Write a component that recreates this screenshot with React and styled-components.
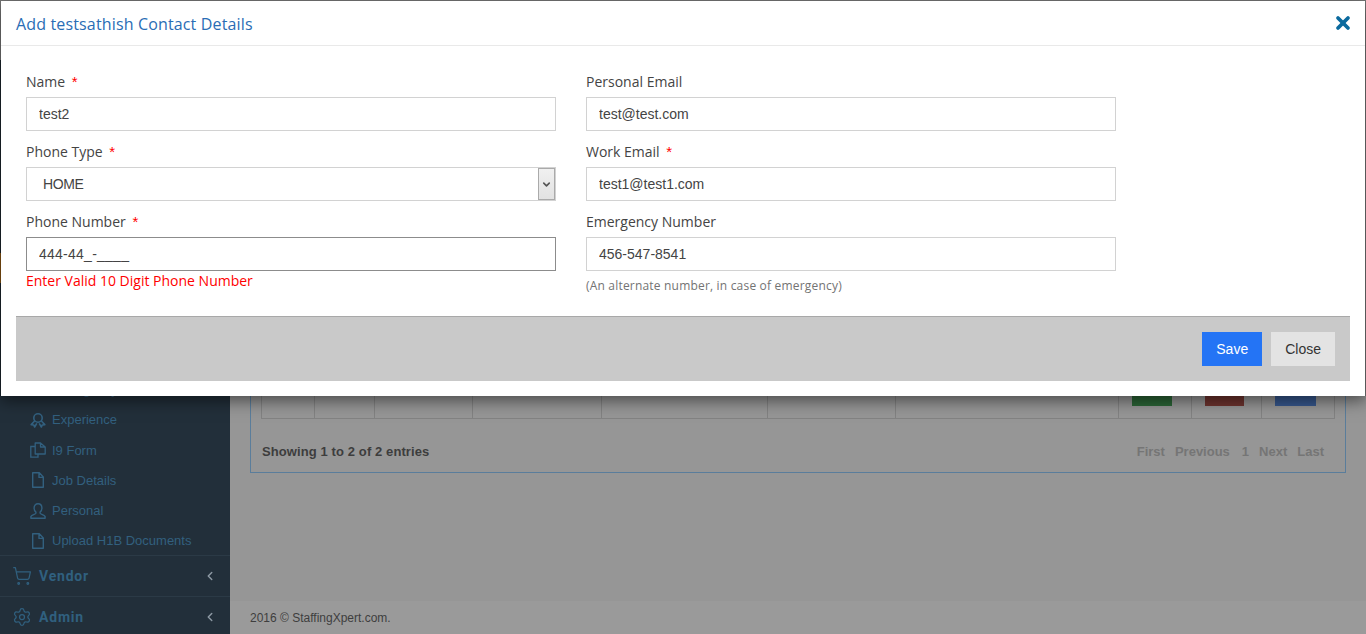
import React from 'react'
import styled, { createGlobalStyle } from 'styled-components'
import { ShoppingCart, Settings, ChevronLeft, X, ChevronDown } from 'lucide-react'

const GlobalStyle = createGlobalStyle`
  html, body { margin: 0; padding: 0; height: 100%; overflow: hidden; }
  body { font-family: "Liberation Sans", Arial, sans-serif; background: #969696; }
  * { box-sizing: border-box; }
`

const BadgeIcon = () => (
  <svg width="16" height="16" viewBox="0 0 16 16" fill="none" stroke="currentColor" strokeWidth="1.6">
    <circle cx="8" cy="6" r="4.2" />
    <path d="M4.6 9 1.2 12.6l2.6.4.8 2 2.2-3.6M11.4 9l3.4 3.6-2.6.4-.8 2-2.2-3.6" strokeLinejoin="round" />
  </svg>
)

const DocsIcon = () => (
  <svg width="16" height="16" viewBox="0 0 16 16" fill="none" stroke="currentColor" strokeWidth="1.3">
    <path d="M5 4.5H.8v10.7H8V12" />
    <path d="M5.2 1h5.3l4.7 4v7H5.2zM10.5 1v4h4.7" strokeLinejoin="round" />
  </svg>
)

const FileIcon = () => (
  <svg width="16" height="16" viewBox="0 0 16 16" fill="none" stroke="currentColor" strokeWidth="1.4">
    <path d="M2.7.8h6.6l4 4.2v10.200H2.7zM9 1v4.400h4.300" strokeLinejoin="round" />
  </svg>
)

const UserIcon = () => (
  <svg width="16" height="16" viewBox="0 0 16 16" fill="none" stroke="currentColor" strokeWidth="1.4">
    <path d="M8 .8c2.400 0 3.900 1.800 3.900 4.200 0 1.700-.7 3.200-1.800 4.100v1.200c0 .7 4.500 1.600 5 3.200v1.700H.9v-1.700c.5-1.600 5-2.500 5-3.200V9.100C4.800 8.200 4.100 6.700 4.100 5 4.100 2.600 5.600.8 8 .8z" strokeLinejoin="round" />
  </svg>
)

// sits almost entirely under the modal, only needs to stay above its edge
const DotIcon = () => (
  <svg width="16" height="16" viewBox="0 0 16 16" fill="none" stroke="currentColor" strokeWidth="1.4">
    <circle cx="8" cy="5" r="4" />
  </svg>
)

const subItems = [
  { label: 'Emergency', Icon: DotIcon },
  { label: 'Experience', Icon: BadgeIcon },
  { label: 'I9 Form', Icon: DocsIcon },
  { label: 'Job Details', Icon: FileIcon },
  { label: 'Personal', Icon: UserIcon },
  { label: 'Upload H1B Documents', Icon: FileIcon },
]

const sections = [
  { label: 'Vendor', Icon: ShoppingCart },
  { label: 'Admin', Icon: Settings },
]

const cells = [53, 60, 98, 129, 166, 128, 223, 73, 70, 73]
const swatches = {
  7: { bg: '#2b6536', w: 40 },
  8: { bg: '#6e332e', w: 39 },
  9: { bg: '#36578d', w: 41 },
}

export default function App() {
  return (
    <>
      <GlobalStyle />
      <Page>
        <Sidebar>
          <ActiveMark />
          <SubList>
            {subItems.map(({ label, Icon }) => (
              <SubItem key={label}>
                <Icon />
                <span>{label}</span>
              </SubItem>
            ))}
          </SubList>
          {sections.map(({ label, Icon }) => (
            <Section key={label}>
              <Icon size={20} strokeWidth={1.5} />
              <SectionLabel>{label}</SectionLabel>
              <ChevronLeft size={14} strokeWidth={2.5} color="#8d99a3" />
            </Section>
          ))}
        </Sidebar>
        <Main>
          <Content>
            <Panel>
              <DataTable>
                <tbody>
                  <tr>
                    {cells.map((w, i) => (
                      <Cell key={i} style={{ width: w }}>
                        {swatches[i] && <Swatch $bg={swatches[i].bg} $w={swatches[i].w} />}
                      </Cell>
                    ))}
                  </tr>
                </tbody>
              </DataTable>
              <PanelFoot>
                <Entries>Showing 1 to 2 of 2 entries</Entries>
                <Pager>
                  <span>First</span>
                  <span>Previous</span>
                  <PageNum>1</PageNum>
                  <span>Next</span>
                  <span>Last</span>
                </Pager>
              </PanelFoot>
            </Panel>
          </Content>
          <PageFooter>2016 © StaffingXpert.com.</PageFooter>
        </Main>
      </Page>

      <Modal>
        <ModalHeader>
          <ModalTitle>Add testsathish Contact Details</ModalTitle>
          <CloseIcon size={20} strokeWidth={4.5} />
        </ModalHeader>
        <ModalBody>
          <Field>
            <Label>Name <Req>*</Req></Label>
            <Input defaultValue="test2" />
          </Field>
          <Field>
            <Label>Personal Email</Label>
            <Input defaultValue="test@test.com" />
          </Field>
          <Field>
            <Label>Phone Type <Req>*</Req></Label>
            <SelectBox>
              <SelectValue>HOME</SelectValue>
              <SelectArrow><ChevronDown size={11} strokeWidth={3.5} /></SelectArrow>
            </SelectBox>
          </Field>
          <Field>
            <Label>Work Email <Req>*</Req></Label>
            <Input defaultValue="test1@test1.com" />
          </Field>
          <Field>
            <Label>Phone Number <Req>*</Req></Label>
            <Input $focus defaultValue="444-44_-____" />
            <ErrorText>Enter Valid 10 Digit Phone Number</ErrorText>
          </Field>
          <Field>
            <Label>Emergency Number</Label>
            <Input defaultValue="456-547-8541" />
            <Hint>(An alternate number, in case of emergency)</Hint>
          </Field>
        </ModalBody>
        <ModalFooter>
          <Button $bg="#2474f5" $color="#fff">Save</Button>
          <Button $bg="#e3e3e3" $color="#333">Close</Button>
        </ModalFooter>
      </Modal>
    </>
  )
}

const Page = styled.div`
  display: flex;
  align-items: flex-start;
  height: 634px;
  width: 1366px;
  overflow: hidden;
`

const Sidebar = styled.aside`
  width: 230px;
  height: 577px;
  margin-top: 60px;
  flex: none;
  display: flex;
  flex-direction: column;
  justify-content: flex-end;
  background: #222f3a;
`

const ActiveMark = styled.div`
  height: 30px;
  margin-bottom: 91px;
  flex: none;
  background: #ad6a17;
`

const SubList = styled.div`
  display: flex;
  flex-direction: column;
`

const SubItem = styled.div`
  height: 30.25px;
  display: flex;
  align-items: center;
  gap: 6px;
  padding: 2px 0 0 30px;
  color: #32607f;
  font-size: 13px;
  svg { flex: none; }
`

const Section = styled.div`
  height: 41px;
  display: flex;
  align-items: center;
  padding: 0 13px 0 12px;
  border-top: 1px solid #2b3a46;
  color: #30607f;
  svg:first-child { flex: none; }
`

const SectionLabel = styled.span`
  flex: 1;
  margin-left: 7px;
  font-family: Roboto, sans-serif;
  font-weight: 700;
  font-size: 14px;
  letter-spacing: 0.8px;
`

const Main = styled.main`
  flex: 1;
  height: 634px;
  display: flex;
  flex-direction: column;
`

const Content = styled.div`
  flex: 1;
  display: flex;
  flex-direction: column;
  justify-content: flex-end;
  padding: 0 20px 128px;
`

const Panel = styled.section`
  border: 1px solid #5a7d9b;
  padding: 0 10px;
`

const DataTable = styled.table`
  width: 1074px;
  border-collapse: collapse;
  table-layout: fixed;
`

const Cell = styled.td`
  height: 60px;
  border: 1px solid #828282;
  vertical-align: top;
  padding: 0;
`

const Swatch = styled.div`
  width: ${p => p.$w}px;
  height: 47px;
  margin-left: 13px;
  background: ${p => p.$bg};
`

const PanelFoot = styled.div`
  display: flex;
  justify-content: space-between;
  align-items: flex-end;
  height: 53px;
  padding: 0 0 12px 1px;
  font-size: 13px;
  line-height: 16px;
  font-weight: 700;
`

const Entries = styled.span`
  color: #3d3d3d;
  letter-spacing: 0.1px;
`

const Pager = styled.div`
  display: flex;
  gap: 10px;
  padding-right: 11px;
  color: #757575;
`

const PageNum = styled.span`
  margin-left: 2px;
`

const PageFooter = styled.footer`
  height: 33px;
  display: flex;
  align-items: center;
  padding-left: 20px;
  background: #9a9a9a;
  color: #3e3e3e;
  font-size: 12px;
`

const Modal = styled.div`
  position: absolute;
  top: 0;
  left: 0;
  width: 1366px;
  height: 396px;
  background: #fff;
  background-clip: padding-box;
  border: 1px solid rgba(0, 0, 0, 0.2);
  border-bottom: none;
  box-shadow: 0 5px 15px rgba(0, 0, 0, 0.5);
  display: flex;
  flex-direction: column;
`

const ModalHeader = styled.header`
  height: 45px;
  flex: none;
  display: flex;
  align-items: center;
  justify-content: space-between;
  padding: 0 12px 0 15px;
  border-bottom: 1px solid #e9e9e9;
`

const ModalTitle = styled.h4`
  margin: 2px 0 0;
  font-family: "Open Sans", sans-serif;
  font-weight: 400;
  font-size: 16px;
  letter-spacing: 0.15px;
  color: #2a6db5;
`

const CloseIcon = styled(X)`
  color: #0b6a9e;
`

const ModalBody = styled.div`
  flex: 1;
  display: grid;
  grid-template-columns: 530px 530px;
  grid-auto-rows: 70px;
  column-gap: 30px;
  padding: 25px 0 0 25px;
`

const Field = styled.div`
  display: flex;
  flex-direction: column;
`

const Label = styled.label`
  height: 26px;
  flex: none;
  font-family: "Open Sans", sans-serif;
  font-size: 14px;
  line-height: 22px;
  color: #444;
`

const Req = styled.span`
  font-family: "Liberation Sans", Arial, sans-serif;
  font-size: 15px;
  color: #f00;
  margin-left: 3px;
`

const Input = styled.input`
  height: 34px;
  width: 100%;
  flex: none;
  padding: 0 12px;
  border: 1px solid ${p => (p.$focus ? '#8c8c8c' : '#d2d2d2')};
  outline: none;
  font-family: "Liberation Sans", Arial, sans-serif;
  font-size: 14px;
  letter-spacing: ${p => (p.$focus ? '0.25px' : '0')};
  color: #444;
  background: #fff;
`

const SelectBox = styled.div`
  height: 34px;
  flex: none;
  display: flex;
  align-items: center;
  justify-content: space-between;
  padding: 0 0 0 16px;
  border: 1px solid #d2d2d2;
  font-size: 14px;
  color: #444;
`

const SelectValue = styled.span`
  letter-spacing: -0.4px;
`

const SelectArrow = styled.div`
  width: 17px;
  height: 100%;
  display: flex;
  align-items: center;
  justify-content: center;
  border: 1px solid #aaa;
  background: linear-gradient(#f0f0f0, #e2e2e2);
  color: #555;
`

const ErrorText = styled.div`
  font-family: "Open Sans", sans-serif;
  font-size: 14px;
  line-height: 20px;
  color: #f00;
`

const Hint = styled.div`
  margin-top: 6px;
  font-family: "Open Sans", sans-serif;
  font-size: 12px;
  letter-spacing: 0.19px;
  line-height: 18px;
  color: #737373;
`

const ModalFooter = styled.footer`
  height: 65px;
  flex: none;
  margin: 0 15px 15px;
  display: flex;
  justify-content: flex-end;
  align-items: center;
  gap: 9px;
  padding-right: 15px;
  background: #c9c9c9;
  border-top: 1px solid #a8a8a8;
`

const Button = styled.button`
  height: 34px;
  padding: 0 14px;
  border: none;
  font-family: "Liberation Sans", Arial, sans-serif;
  font-size: 14px;
  background: ${p => p.$bg};
  color: ${p => p.$color};
`
